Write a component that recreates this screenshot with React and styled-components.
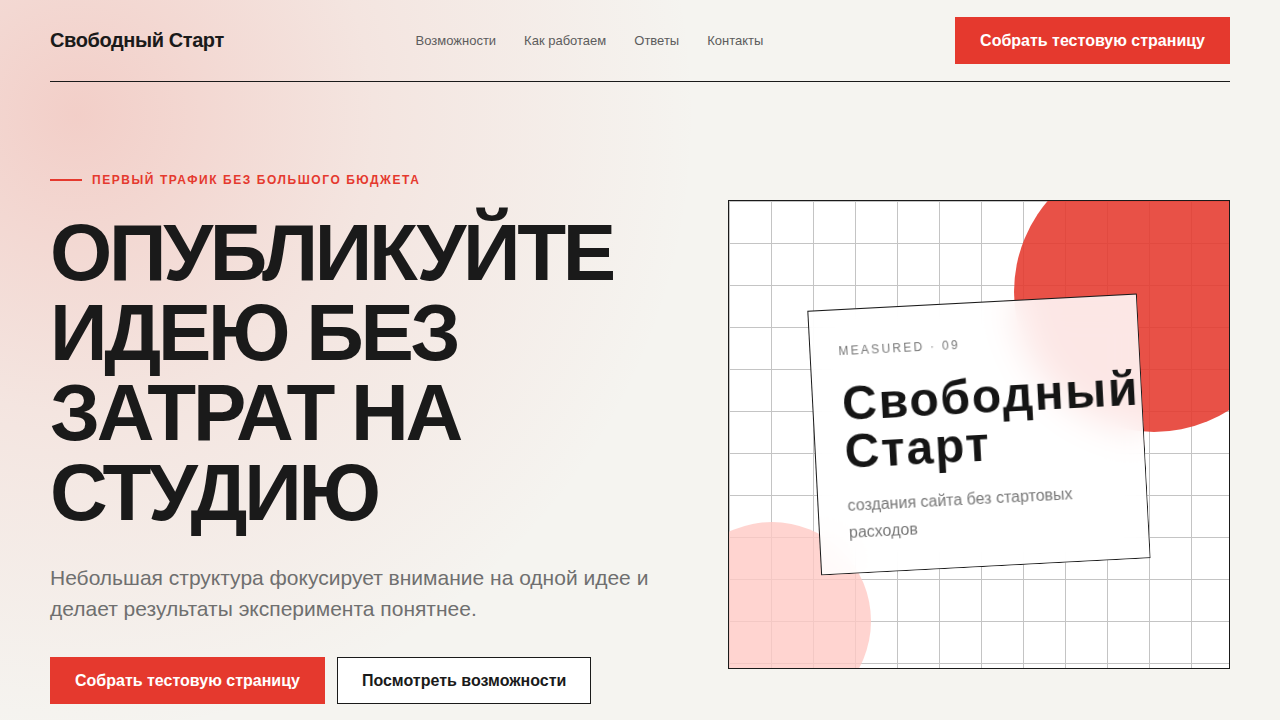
import styled, { createGlobalStyle } from "styled-components";

const GlobalStyle = createGlobalStyle`
  * {
    box-sizing: border-box;
  }
  body {
    margin: 0;
    font-family: "Liberation Sans", Arial, sans-serif;
    color: #1a1a1a;
    background: #f5f4f0;
  }
`;

const Page = styled.div`
  min-height: 100vh;
  padding: 0 50px;
  background:
    radial-gradient(circle at 6% 16%, rgba(236, 120, 108, 0.3) 0, rgba(236, 120, 108, 0.12) 22%, rgba(245, 244, 240, 0) 46%),
    #f5f4f0;
`;

const Header = styled.header`
  display: flex;
  align-items: center;
  justify-content: space-between;
  padding: 17px 0;
  border-bottom: 1px solid #1a1a1a;
`;

const Logo = styled.div`
  font-size: 20px;
  font-weight: 700;
  letter-spacing: -0.02em;
`;

const Nav = styled.nav`
  display: flex;
  gap: 28px;
  a {
    font-size: 13px;
    color: #5c5c5c;
    text-decoration: none;
  }
`;

const Button = styled.a`
  display: inline-flex;
  align-items: center;
  justify-content: center;
  height: 47px;
  padding: 0 24px;
  font-size: 16px;
  font-weight: 700;
  text-decoration: none;
  border: 1px solid ${(p) => (p.$outline ? "#1a1a1a" : "#e5392e")};
  background: ${(p) => (p.$outline ? "#ffffff" : "#e5392e")};
  color: ${(p) => (p.$outline ? "#1a1a1a" : "#ffffff")};
`;

const Hero = styled.section`
  display: grid;
  grid-template-columns: 1fr 502px;
  gap: 56px;
  align-items: center;
  padding-top: 91px;
`;

const Left = styled.div`
  display: flex;
  flex-direction: column;
`;

const Tagline = styled.div`
  display: flex;
  align-items: center;
  gap: 10px;
  height: 14px;
  font-size: 12px;
  font-weight: 700;
  letter-spacing: 0.13em;
  color: #e5392e;
  text-transform: uppercase;
  &::before {
    content: "";
    width: 32px;
    height: 2px;
    background: #e5392e;
  }
`;

const Title = styled.h1`
  margin: 26px 0 0;
  font-size: 80px;
  line-height: 1;
  font-weight: 700;
  letter-spacing: -0.041em;
  text-transform: uppercase;
  color: #1a1a1a;
`;

const Lead = styled.p`
  margin: 29px 0 0;
  max-width: 610px;
  font-size: 21px;
  line-height: 31px;
  color: #6f6f6f;
`;

const Actions = styled.div`
  display: flex;
  gap: 12px;
  margin-top: 33px;
`;

const Canvas = styled.div`
  position: relative;
  height: 469px;
  margin-bottom: 8px;
  display: flex;
  align-items: center;
  justify-content: center;
  overflow: hidden;
  border: 1px solid #1a1a1a;
  background-color: #ffffff;
  background-image:
    linear-gradient(to right, #c4c4c4 1px, transparent 1px),
    linear-gradient(to bottom, #c4c4c4 1px, transparent 1px);
  background-size: 42px 42px;
`;

const Blob = styled.div`
  position: absolute;
  border-radius: 50%;
  width: ${(p) => p.$size}px;
  height: ${(p) => p.$size}px;
  background: ${(p) => p.$color};
  opacity: ${(p) => p.$opacity};
  ${(p) => p.$place}
`;

const Card = styled.div`
  position: relative;
  z-index: 1;
  width: 330px;
  padding: 33px 30px 27px 29px;
  border: 1px solid #1a1a1a;
  background: rgba(255, 255, 255, 0.86);
  backdrop-filter: blur(18px);
  transform: rotate(-3deg);
`;

const CardLabel = styled.div`
  padding-left: 0;
  margin-left: -1px;
  font-size: 12px;
  line-height: 17px;
  letter-spacing: 0.19em;
  color: #777777;
  text-transform: uppercase;
`;

const CardTitle = styled.div`
  margin-top: 20px;
  font-size: 48px;
  line-height: 48px;
  font-weight: 700;
  letter-spacing: 1.8px;
  white-space: nowrap;
  color: #151515;
`;

const CardText = styled.div`
  margin-top: 16px;
  font-size: 16px;
  line-height: 27px;
  color: #777777;
`;

export default function App() {
  return (
    <>
      <GlobalStyle />
      <Page>
        <Header>
          <Logo>Свободный Старт</Logo>
          <Nav>
            <a href="#features">Возможности</a>
            <a href="#how">Как работаем</a>
            <a href="#faq">Ответы</a>
            <a href="#contacts">Контакты</a>
          </Nav>
          <Button href="#start">Собрать тестовую страницу</Button>
        </Header>
        <Hero>
          <Left>
            <Tagline>Первый трафик без большого бюджета</Tagline>
            <Title>
              Опубликуйте идею без затрат на студию
            </Title>
            <Lead>
              Небольшая структура фокусирует внимание на одной идее и делает
              результаты эксперимента понятнее.
            </Lead>
            <Actions>
              <Button href="#start">Собрать тестовую страницу</Button>
              <Button href="#features" $outline>
                Посмотреть возможности
              </Button>
            </Actions>
          </Left>
          <Canvas>
            <Blob
              $size={280}
              $color="#e5392e"
              $opacity={0.88}
              $place="top: -49px; right: -65px;"
            />
            <Blob
              $size={198}
              $color="#ffc9c4"
              $opacity={0.8}
              $place="left: -56px; bottom: -52px;"
            />
            <Card>
              <CardLabel>Measured · 09</CardLabel>
              <CardTitle>
                Свободный
                <br />
                Старт
              </CardTitle>
              <CardText>создания сайта без стартовых расходов</CardText>
            </Card>
          </Canvas>
        </Hero>
      </Page>
    </>
  );
}
